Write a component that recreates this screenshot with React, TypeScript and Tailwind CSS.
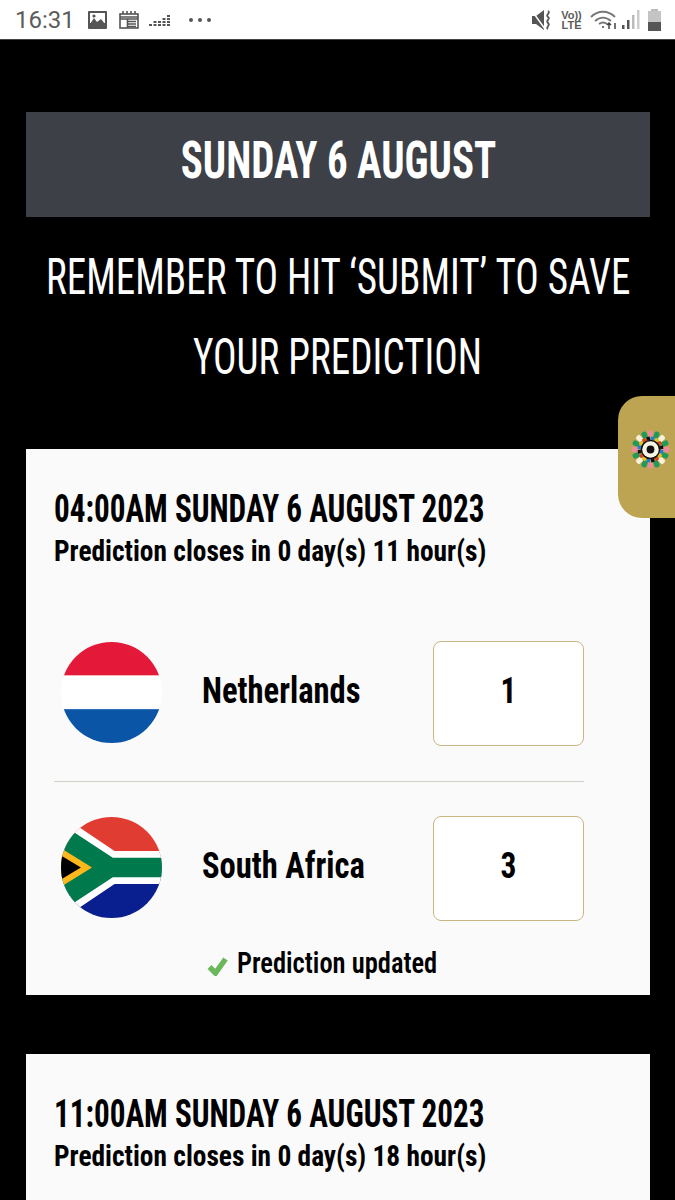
import { ReactNode } from "react";

const din = "font-['Liberation_Sans_Narrow','Roboto_Condensed','Liberation_Sans',sans-serif]";

function Netherlands() {
  return (
    <svg viewBox="0 0 100 100" className="h-[101px] w-[101px] shrink-0">
      <defs>
        <clipPath id="nl">
          <circle cx="50" cy="50" r="50" />
        </clipPath>
      </defs>
      <g clipPath="url(#nl)">
        <rect width="100" height="34" fill="#e4193a" />
        <rect y="33" width="100" height="34" fill="#ffffff" />
        <rect y="66.500" width="100" height="34" fill="#0a55a5" />
      </g>
    </svg>
  );
}

function SouthAfrica() {
  return (
    <svg viewBox="0 0 100 100" className="h-[101px] w-[101px] shrink-0">
      <defs>
        <clipPath id="za">
          <circle cx="50" cy="50" r="50" />
        </clipPath>
      </defs>
      <g clipPath="url(#za)">
        <rect width="100" height="50" fill="#e03c31" />
        <rect y="50" width="100" height="50" fill="#0a1f8f" />
        <path d="M0 -2 L53 33.700 H100 V66.300 H53 L0 102 Z" fill="#ffffff" />
        <path d="M0 6.800 L51.300 40.300 H100 V59.700 H51.300 L0 93.200 Z" fill="#007a4d" />
        <path d="M0 31 L30.700 50 L0 69 Z" fill="#ffb81c" />
        <path d="M0 38 L19.700 50 L0 62 Z" fill="#000000" />
      </g>
    </svg>
  );
}

function ScoreRow({ flag, name, score }: { flag: ReactNode; name: string; score: number }) {
  return (
    <div className="flex items-center">
      <div className="mb-[2px] ml-[7px] w-[141px]">{flag}</div>
      <div className="w-[232px] pb-[6px]">
        <span className="block origin-left scale-x-[0.905] text-[36px] font-bold whitespace-nowrap text-black">{name}</span>
      </div>
      <div className="flex h-[105px] w-[151px] items-center justify-center rounded-[8px] border border-[#c9b682] bg-white pb-[6px] text-[37px] font-bold text-black">
        <span className="block scale-x-[0.85]">{score}</span>
      </div>
    </div>
  );
}

function FifaMark() {
  const petals = Array.from({ length: 16 }, (_, i) => i * 22.5);
  const colors = ["#ee8a9a", "#1f9a58", "#f6f0d8", "#1f9a58"];
  const inner = ["#1b7fd0", "#e8c020", "#d8401f", "#111111"];
  return (
    <svg viewBox="0 0 40 40" className="mb-[16px] ml-[7px] h-[39px] w-[39px]">
      {petals.map((a, i) => (
        <rect key={a} x="17.300" y="0.500" width="5.400" height="7" rx="1.800" fill={colors[i % 4]} transform={`rotate(${a} 20 20)`} />
      ))}
      {petals.map((a, i) => (
        <rect key={a} x="18.200" y="6.800" width="3.600" height="3.400" fill={inner[i % 4]} transform={`rotate(${a + 11} 20 20)`} />
      ))}
      <circle cx="20" cy="20" r="10" fill="#111111" />
      <circle cx="20" cy="20" r="8.500" fill="#f9f5e6" />
      <circle cx="20" cy="20" r="4" fill="#111111" />
    </svg>
  );
}

function StatusBar() {
  return (
    <div className="flex h-10 items-center justify-between border-b border-[#444] bg-white pr-[14px] pl-[15px] text-[#5c5c5c]">
      <div className="flex items-center">
        <span className="w-[58px] font-['Roboto',sans-serif] text-[24px] leading-none">16:31</span>
        <svg viewBox="0 0 19 18" className="ml-[15px] h-[18px] w-[19px]">
          <rect width="19" height="18" rx="1" fill="#555" />
          <rect x="2" y="2" width="15" height="10" fill="#fff" />
          <path d="M2 13 L6 7 L9 11 L13 8 L17 13 V14 H2 Z" fill="#555" />
          <circle cx="6" cy="5" r="1.600" fill="#555" />
        </svg>
        <svg viewBox="0 0 20 18" className="ml-[12px] h-[18px] w-[20px]" fill="none" stroke="#555" strokeWidth="1.600">
          <rect x="1" y="3" width="18" height="14" />
          <path d="M1 6 H19 M1 8 H19 M9 10.500 H17 M9 13 H17 M9 15.500 H17 M8.500 8 V17" />
          <path d="M4 0 V3 M8 0 V3 M12 0 V3 M16 0 V3" />
        </svg>
        <svg viewBox="0 0 22 14" className="ml-[10px] h-[14px] w-[22px]" fill="#555">
          <path d="M0 11h3v2H0z M4.500 11h3v2h-3z M4.500 8h3v2h-3z M9 11h3v2H9z M9 8h3v2H9z M13.500 11h3v2h-3z M13.500 8h3v2h-3z M13.500 5h3v2h-3z M18 11h3v2h-3z M18 8h3v2h-3z M18 5h3v2h-3z M18 2h3v2h-3z" />
        </svg>
        <div className="ml-[18px] flex gap-[5px]">
          <span className="h-1 w-1 rounded-full bg-[#555]" />
          <span className="h-1 w-1 rounded-full bg-[#555]" />
          <span className="h-1 w-1 rounded-full bg-[#555]" />
        </div>
      </div>
      <div className="flex items-center">
        <svg viewBox="0 0 20 20" className="h-[20px] w-[20px]" fill="#555">
          <path d="M0 6h4l8-6v20l-8-6H0z" />
          <path d="M0 1 L13 19" stroke="#fff" strokeWidth="1.500" />
          <path d="M16 1c3 2-3 4 0 6s-3 3 0 6-3 4 0 6" fill="none" stroke="#555" strokeWidth="1.800" />
        </svg>
        <div className="ml-[10px] flex w-[19px] flex-col items-center font-['Liberation_Sans',sans-serif] text-[11px] leading-[10px] font-bold">
          <span>Vo))</span>
          <span>LTE</span>
        </div>
        <svg viewBox="0 0 28 20" className="ml-[9px] h-[20px] w-[28px]" fill="none" stroke="#777" strokeWidth="1.900">
          <path d="M1 7c7-7 17-7 24 0" />
          <path d="M5 11c5-4.500 11-4.500 16 0" />
          <path d="M9 14c2.500-2 5.500-2 8 0" />
          <path d="M12 17h2M19 19v-6m-2 2 2-2 2 2M25 13v6" stroke="#444" strokeWidth="1.500" />
        </svg>
        <svg viewBox="0 0 18 20" className="ml-[4px] h-[20px] w-[18px]" fill="#555">
          <rect x="0" y="15" width="2.500" height="4" />
          <rect x="5" y="10" width="2.500" height="9" />
          <rect x="10" y="5" width="2.500" height="14" fill="#bbb" />
          <rect x="15" y="0" width="2.500" height="19" fill="#ccc" />
        </svg>
        <div className="ml-[8px] flex h-[22px] w-[13px] flex-col items-center">
          <span className="h-[2px] w-[7px] bg-[#bbb]" />
          <div className="flex flex-1 flex-col justify-end bg-[#c4c4c4]">
            <span className="h-[9px] w-[13px] bg-[#555]" />
          </div>
        </div>
      </div>
    </div>
  );
}

function MatchHead({ title, closes }: { title: string; closes: string }) {
  return (
    <>
      <h3 className="origin-left scale-x-[0.82] text-[38px] leading-[40px] font-bold whitespace-nowrap text-black">{title}</h3>
      <p className="mt-[6px] origin-left scale-x-[0.913] text-[30px] leading-[32px] font-bold whitespace-nowrap text-black">{closes}</p>
    </>
  );
}

export default function App() {
  return (
    <div className={`relative h-[1200px] w-[675px] overflow-hidden bg-black ${din}`}>
      <StatusBar />

      <div className="pt-[72px] pr-[25px] pl-[26px]">
        <div className="flex h-[105px] items-center justify-center bg-[#3d4047] pb-[8px] text-[52px] font-bold text-white">
          <span className="block shrink-0 scale-x-[0.787] whitespace-nowrap">SUNDAY 6 AUGUST</span>
        </div>
        <div className="mt-[20px] text-[50px] leading-[80px] text-white">
          <div className="flex justify-center">
            <span className="block shrink-0 scale-x-[0.783] whitespace-nowrap">REMEMBER TO HIT ‘SUBMIT’ TO SAVE</span>
          </div>
          <div className="flex justify-center">
            <span className="block shrink-0 scale-x-[0.783] whitespace-nowrap">YOUR PREDICTION</span>
          </div>
        </div>

        <section className="mt-[52px] h-[546px] bg-[#fafafa] pt-[40px] pr-[66px] pl-[28px]">
          <MatchHead title="04:00AM SUNDAY 6 AUGUST 2023" closes="Prediction closes in 0 day(s) 11 hour(s)" />
          <div className="mt-[74px] border-b border-[#d5d0c4] pb-[35px]">
            <ScoreRow flag={<Netherlands />} name="Netherlands" score={1} />
          </div>
          <div className="mt-[34px]">
            <ScoreRow flag={<SouthAfrica />} name="South Africa" score={3} />
          </div>
          <div className="mt-[26px] ml-[5px] flex items-center justify-center gap-[9px]">
            <svg viewBox="0 0 21 20" className="mt-[6px] h-[20px] w-[21px]">
              <path d="M2.500 11 L8.500 17 L18.500 3" fill="none" stroke="#6cb75c" strokeWidth="5.500" />
            </svg>
            <div className="w-[199px]">
              <span className="block origin-left scale-x-[0.883] text-[30px] leading-[32px] font-semibold whitespace-nowrap text-black">
                Prediction updated
              </span>
            </div>
          </div>
        </section>

        <section className="mt-[59px] h-[146px] bg-[#fafafa] pt-[40px] pl-[28px]">
          <MatchHead title="11:00AM SUNDAY 6 AUGUST 2023" closes="Prediction closes in 0 day(s) 18 hour(s)" />
        </section>
      </div>

      <div className="absolute top-[396px] right-0 flex h-[122px] w-[57px] items-center justify-center rounded-l-[24px] bg-[#bda452]">
        <FifaMark />
      </div>
    </div>
  );
}
